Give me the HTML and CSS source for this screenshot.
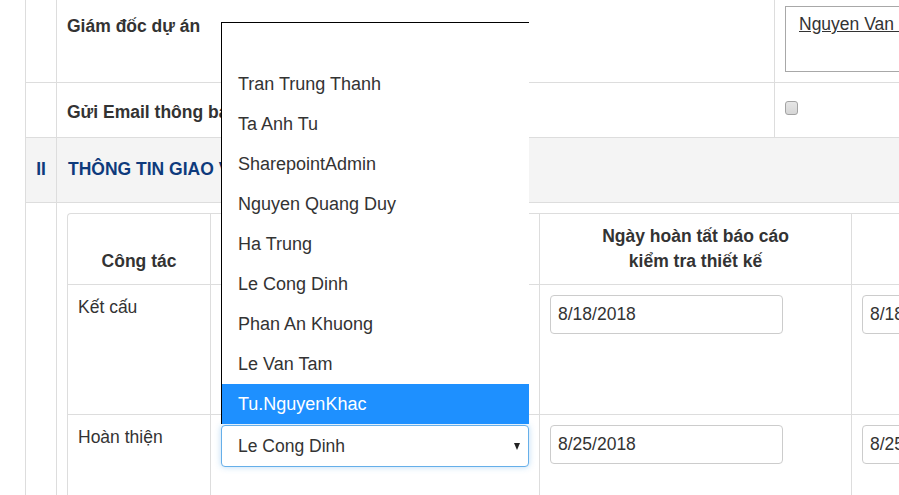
FILE: index.html
```html
<!DOCTYPE html>
<html lang="vi">
<head>
<meta charset="utf-8">
<title>Thông tin giao việc</title>
<link rel="stylesheet" href="styles.css">
</head>
<body>
<div class="page">
  <div class="form">
    <div class="cell idx"></div>
    <div class="cell label label-manager">Giám đốc dự án</div>
    <div class="cell value value-manager">
      <div class="people-box"><a class="person" href="#">Nguyen Van&nbsp;&nbsp;&nbsp;&nbsp;Tuan</a></div>
    </div>

    <div class="cell idx"></div>
    <div class="cell label label-email">Gửi Email thông báo</div>
    <div class="cell value value-email"><span class="checkbox"></span></div>

    <div class="cell idx section">II</div>
    <div class="cell section section-title">THÔNG TIN GIAO VIỆC</div>

    <div class="cell idx detail-idx"></div>
    <div class="cell detail">
      <div class="grid">
        <div class="gcell head">Công tác</div>
        <div class="gcell head">Người kiểm tra</div>
        <div class="gcell head">Ngày hoàn tất báo cáo<br>kiểm tra thiết kế</div>
        <div class="gcell head head-far">Ngày hoàn tất<br>thẩm tra</div>

        <div class="gcell body-row1">Kết cấu</div>
        <div class="gcell body-row1"></div>
        <div class="gcell body-row1"><div class="input">8/18/2018</div></div>
        <div class="gcell body-row1"><div class="input">8/18/2018</div></div>

        <div class="gcell body-row2">Hoàn thiện</div>
        <div class="gcell body-row2">
          <div class="select-wrap">
            <ul class="dropdown">
              <li class="option">&nbsp;</li>
              <li class="option">Tran Trung Thanh</li>
              <li class="option">Ta Anh Tu</li>
              <li class="option">SharepointAdmin</li>
              <li class="option">Nguyen Quang Duy</li>
              <li class="option">Ha Trung</li>
              <li class="option">Le Cong Dinh</li>
              <li class="option">Phan An Khuong</li>
              <li class="option">Le Van Tam</li>
              <li class="option selected">Tu.NguyenKhac</li>
            </ul>
            <div class="select"><span>Le Cong Dinh</span><span class="caret"></span></div>
          </div>
        </div>
        <div class="gcell body-row2"><div class="input">8/25/2018</div></div>
        <div class="gcell body-row2"><div class="input">8/25/2018</div></div>
      </div>
    </div>
  </div>
</div>
</body>
</html>
```

FILE: styles.css
```css
html, body {
  margin: 0;
  padding: 0;
  background: #fff;
}

body {
  overflow: hidden;
  font-family: "Liberation Sans", Arial, sans-serif;
  font-size: 17.5px;
  line-height: 25px;
  color: #333;
}

.page {
  width: 1400px;
  padding-left: 25px;
}

.form {
  display: grid;
  grid-template-columns: 31px 718px 420px;
  grid-template-rows: 83px 55px 65px 320px;
  border-left: 1px solid #ddd;
  width: max-content;
}

.cell {
  box-sizing: border-box;
  border-right: 1px solid #ddd;
  border-bottom: 1px solid #ddd;
  padding: 10px;
}

.label {
  font-weight: bold;
  padding-left: 10px;
}

.label-manager {
  padding-top: 14px;
}

.label-email {
  padding-top: 17px;
}

.value-manager {
  padding: 6px 0 0 10px;
}

.people-box {
  box-sizing: border-box;
  width: 330px;
  height: 66px;
  border: 1px solid #a8a8a8;
  padding: 5px 13px;
  white-space: nowrap;
  overflow: hidden;
}

.person {
  color: #333;
  text-decoration: underline;
}

.value-email {
  padding: 18px 0 0 10px;
}

.checkbox {
  display: block;
  box-sizing: border-box;
  width: 13px;
  height: 14px;
  border: 1px solid #a3a3a3;
  border-radius: 3px;
  background: linear-gradient(#e6e6e6, #d6d6d6);
}

.section {
  background: #f4f4f4;
  color: #0e3a7c;
  font-weight: bold;
  padding-top: 19px;
}

.idx.section {
  text-align: center;
  padding-left: 0;
  padding-right: 0;
}

.section-title {
  grid-column: 2 / 4;
  padding-left: 11px;
}

.detail-idx {
  border-bottom: none;
}

.detail {
  grid-column: 2 / 4;
  padding: 10px 0 0 10px;
  border-bottom: none;
}

.grid {
  display: grid;
  grid-template-columns: 143px 329px 312px 312px;
  grid-template-rows: 71px 130px 90px;
  border-top: 1px solid #ddd;
  border-left: 1px solid #ddd;
  border-top-left-radius: 4px;
  width: max-content;
}

.gcell {
  box-sizing: border-box;
  border-right: 1px solid #ddd;
  border-bottom: 1px solid #ddd;
  padding: 10px;
}

.head {
  display: flex;
  align-items: flex-end;
  justify-content: center;
  text-align: center;
  font-weight: bold;
}

.head-far {
  justify-content: flex-end;
}

.input {
  box-sizing: border-box;
  width: 233px;
  height: 39px;
  border: 1px solid #ccc;
  border-radius: 4px;
  padding: 0 7px;
  line-height: 37px;
  color: #333;
}

.select-wrap {
  position: relative;
  width: 308px;
}

.select {
  box-sizing: border-box;
  width: 308px;
  height: 42px;
  border: 1px solid #66afe9;
  border-radius: 4px;
  box-shadow: 0 0 6px rgba(102, 175, 233, 0.45);
  padding: 0 8px 0 16px;
  display: flex;
  align-items: center;
  justify-content: space-between;
  color: #333;
  background: #fff;
}

.caret {
  width: 0;
  height: 0;
  border-left: 3.5px solid transparent;
  border-right: 3.5px solid transparent;
  border-top: 7px solid #222;
  margin-top: 1px;
}

.dropdown {
  position: absolute;
  left: 0;
  bottom: 100%;
  z-index: 5;
  box-sizing: border-box;
  width: 308px;
  margin: 0 0 1px 0;
  padding: 1px 0 0 0;
  list-style: none;
  background: #fff;
  border-top: 1px solid #000;
  border-left: 1px solid #000;
}

.option {
  box-sizing: border-box;
  height: 40px;
  line-height: 40px;
  padding-left: 16px;
  font-size: 18px;
  color: #333;
  white-space: nowrap;
}

.option.selected {
  background: #1e90ff;
  color: #fff;
}
```
